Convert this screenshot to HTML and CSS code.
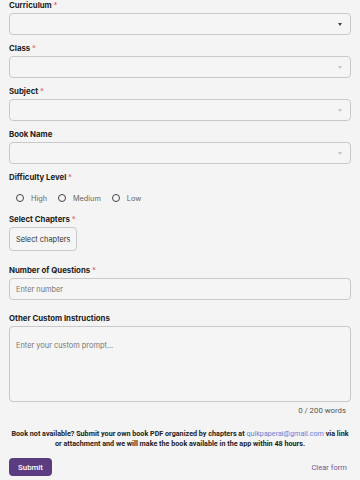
FILE: index.html
```html
<!DOCTYPE html>
<html>
<head>
<meta charset="utf-8">
<link rel="stylesheet" href="styles.css">
</head>
<body>
<form class="form">
  <div class="field">
    <div class="label">Curriculum <span class="req">*</span></div>
    <div class="select"><span class="caret caret-dark"></span></div>
  </div>
  <div class="field">
    <div class="label">Class <span class="req">*</span></div>
    <div class="select"><span class="caret"></span></div>
  </div>
  <div class="field">
    <div class="label">Subject <span class="req">*</span></div>
    <div class="select"><span class="caret"></span></div>
  </div>
  <div class="field">
    <div class="label">Book Name</div>
    <div class="select"><span class="caret"></span></div>
  </div>
  <div class="field">
    <div class="label">Difficulty Level <span class="req">*</span></div>
    <div class="radios">
      <label class="radio"><span class="dot"></span>High</label>
      <label class="radio"><span class="dot"></span>Medium</label>
      <label class="radio"><span class="dot"></span>Low</label>
    </div>
  </div>
  <div class="field field-chapters">
    <div class="label">Select Chapters <span class="req">*</span></div>
    <div class="row"><button type="button" class="chapters-btn">Select chapters</button></div>
  </div>
  <div class="field field-number">
    <div class="label">Number of Questions <span class="req">*</span></div>
    <div class="input"><span class="placeholder">Enter number</span></div>
  </div>
  <div class="field">
    <div class="label">Other Custom Instructions</div>
    <div class="textarea"><span class="placeholder">Enter your custom prompt...</span></div>
    <div class="counter">0 / 200 words</div>
  </div>
  <p class="note">Book not available? Submit your own book PDF organized by chapters at <span class="email">quikpaperai@gmail.com</span> via link or attachment and we will make the book available in the app within 48 hours.</p>
  <div class="actions">
    <button type="button" class="submit">Submit</button>
    <span class="clear">Clear form</span>
  </div>
</form>
</body>
</html>
```
FILE: styles.css
```css
html, body {
  margin: 0;
  padding: 0;
  background: #f4f4f4;
}
.form {
  display: flex;
  flex-direction: column;
  gap: 8px;
  padding: 0 9px;
  font-family: Inter, "Noto Sans", sans-serif;
}
.field {
  display: flex;
  flex-direction: column;
  gap: 3px;
}
.label {
  font-size: 7.8px;
  line-height: 10px;
  font-weight: 700;
  color: #222;
}
.req {
  color: #e05a67;
  font-weight: 400;
}
.select, .input {
  height: 22px;
  box-sizing: border-box;
  border: 1px solid #c9c9c9;
  border-radius: 4px;
  background: #f5f5f5;
  display: flex;
  align-items: center;
  justify-content: flex-end;
  padding: 0 8px 0 6px;
}
.input {
  justify-content: flex-start;
}
.caret {
  width: 0;
  height: 0;
  border-left: 2.5px solid transparent;
  border-right: 2.5px solid transparent;
  border-top: 3px solid #c4c4c4;
}
.caret-dark {
  border-top-color: #444;
}
.radios {
  display: flex;
  align-items: center;
  height: 16px;
  margin-top: 5px;
  padding-left: 7px;
  gap: 11px;
}
.radio {
  display: flex;
  align-items: center;
  gap: 7px;
  font-size: 7.3px;
  color: #666;
}
.dot {
  width: 8px;
  height: 8px;
  box-sizing: border-box;
  border: 1.3px solid #444;
  border-radius: 50%;
}
.row {
  display: flex;
}
.chapters-btn {
  height: 24px;
  padding: 0 6px;
  border: 1px solid #c9c9c9;
  border-radius: 4px;
  background: #f5f5f5;
  font-family: Inter, "Noto Sans", sans-serif;
  font-size: 7.4px;
  color: #333;
}
.field-chapters {
  margin-bottom: 6px;
}
.field-number {
  margin-bottom: 5px;
}
.placeholder {
  font-size: 7.4px;
  color: #777;
}
.textarea {
  height: 76px;
  box-sizing: border-box;
  border: 1px solid #c9c9c9;
  border-radius: 4px;
  background: #f5f5f5;
  padding: 10px 6px;
  line-height: 10px;
}
.counter {
  margin-top: 1px;
  text-align: right;
  padding-right: 5px;
  font-family: Roboto, sans-serif;
  font-size: 7.8px;
  line-height: 10px;
  color: #555;
}
.note {
  margin: 5px 0 0;
  text-align: center;
  font-family: Roboto, sans-serif;
  font-weight: 700;
  font-size: 7.2px;
  line-height: 10px;
  color: #222;
}
.email {
  color: #5b82d8;
  font-weight: 400;
}
.actions {
  display: flex;
  align-items: center;
  justify-content: space-between;
  margin-top: 1px;
}
.submit {
  height: 18px;
  width: 43px;
  border: none;
  border-radius: 4px;
  background: #5b3c80;
  color: #fff;
  font-family: Roboto, sans-serif;
  font-size: 7.8px;
  font-weight: 500;
  padding: 0;
}
.clear {
  font-family: Roboto, sans-serif;
  font-size: 7.6px;
  color: #6b5ba0;
  padding-right: 4px;
}
```
